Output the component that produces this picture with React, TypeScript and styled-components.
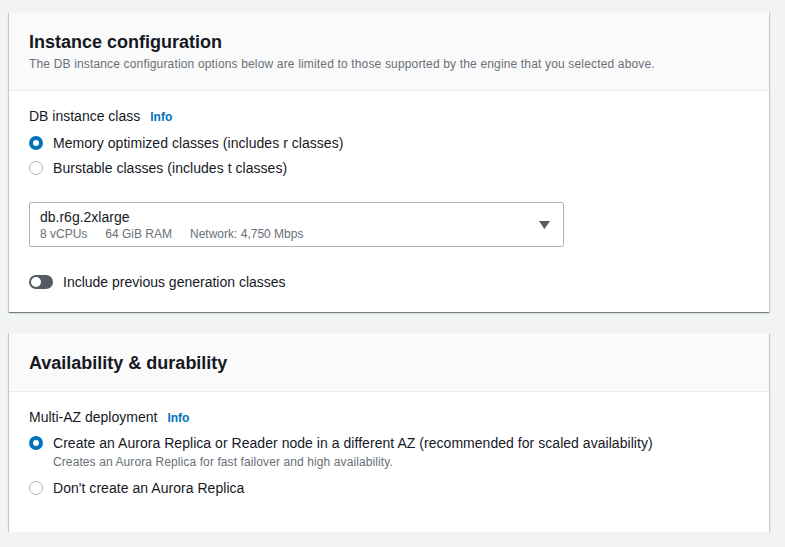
import React from "react";
import styled, { createGlobalStyle } from "styled-components";

const Global = createGlobalStyle`
  html, body { margin: 0; padding: 0; background: #f2f3f3; }
  body { font-family: "Liberation Sans", Arial, sans-serif; color: #16191f; -webkit-font-smoothing: antialiased; }
  * { box-sizing: border-box; }
`;

const Page = styled.div`
  display: flex;
  flex-direction: column;
  gap: 21px;
  padding: 12px 16px 0 9px;
  width: 785px;
`;

const Card = styled.section`
  background: #fff;
  box-shadow: 0 1px 1px 0 rgba(0, 28, 36, 0.35), 1px 1px 1px 0 rgba(0, 28, 36, 0.15),
    -1px 1px 1px 0 rgba(0, 28, 36, 0.15);
`;

const Header = styled.header<{ $bottom: number }>`
  background: #fafafa;
  border-bottom: 1px solid #eaeded;
  padding: 19px 20px ${(p) => p.$bottom}px;
`;

const Title = styled.h2`
  margin: 0;
  font-size: 18px;
  line-height: 22px;
  font-weight: 700;
  color: #16191f;
`;

const Desc = styled.p`
  margin: 3px 0 0;
  font-size: 12px;
  line-height: 16px;
  letter-spacing: 0.16px;
  color: #687078;
`;

const Body = styled.div<{ $bottom: number }>`
  display: flex;
  flex-direction: column;
  align-items: flex-start;
  padding: 15px 20px ${(p) => p.$bottom}px;
`;

const Label = styled.div`
  display: flex;
  align-items: baseline;
  gap: 10px;
  font-size: 14px;
  line-height: 20px;
  color: #16191f;
`;

const Info = styled.a`
  font-size: 12px;
  font-weight: 700;
  color: #0073bb;
  text-decoration: none;
`;

const RadioGroup = styled.div<{ $gap: number; $top: number }>`
  display: flex;
  flex-direction: column;
  gap: ${(p) => p.$gap}px;
  margin-top: ${(p) => p.$top}px;
`;

const RadioRow = styled.div`
  display: grid;
  grid-template-columns: 14px auto;
  column-gap: 10px;
  align-items: start;
`;

const RadioDot = styled.span<{ $on?: boolean }>`
  width: 14px;
  height: 14px;
  margin-top: 3px;
  border-radius: 50%;
  background: #fff;
  border: ${(p) => (p.$on ? "4px solid #0073bb" : "1px solid #aab7b8")};
`;

const RadioText = styled.div`
  font-size: 14px;
  line-height: 20px;
  letter-spacing: 0.04px;
  color: #16191f;
`;

const RadioDesc = styled.div`
  font-size: 12px;
  line-height: 16px;
  letter-spacing: 0.1px;
  color: #687078;
  margin-top: 1px;
`;

const Select = styled.div`
  margin-top: 24px;
  width: 535px;
  height: 45px;
  border: 1px solid #aab7b8;
  border-radius: 2px;
  display: flex;
  align-items: center;
  justify-content: space-between;
  padding: 0 13px 0 10px;
`;

const SelectMain = styled.div`
  font-size: 14px;
  line-height: 18px;
  color: #16191f;
`;

const Specs = styled.div`
  display: flex;
  gap: 18px;
  font-size: 12px;
  line-height: 16px;
  color: #687078;
`;

const ToggleRow = styled.div`
  display: flex;
  align-items: center;
  gap: 10px;
  margin-top: 25px;
  font-size: 14px;
  line-height: 20px;
  color: #16191f;
`;

const Toggle = styled.span`
  position: relative;
  width: 24px;
  height: 14px;
  border-radius: 7px;
  background: #545b64;
  &::after {
    content: "";
    position: absolute;
    left: 2px;
    top: 2px;
    width: 10px;
    height: 10px;
    border-radius: 50%;
    background: #fff;
  }
`;

const Caret = () => (
  <svg width="11" height="8" viewBox="0 0 11 8">
    <path d="M0 0 H11 L5.5 8 Z" fill="#545b64" />
  </svg>
);

export default function App() {
  return (
    <>
      <Global />
      <Page>
        <Card>
          <Header $bottom={18}>
            <Title>Instance configuration</Title>
            <Desc>
              The DB instance configuration options below are limited to those supported by the engine that you
              selected above.
            </Desc>
          </Header>
          <Body $bottom={20}>
            <Label>
              DB instance class <Info href="#">Info</Info>
            </Label>
            <RadioGroup $gap={5} $top={6}>
              <RadioRow>
                <RadioDot $on />
                <RadioText>Memory optimized classes (includes r classes)</RadioText>
              </RadioRow>
              <RadioRow>
                <RadioDot />
                <RadioText>Burstable classes (includes t classes)</RadioText>
              </RadioRow>
            </RadioGroup>
            <Select>
              <div>
                <SelectMain>db.r6g.2xlarge</SelectMain>
                <Specs>
                  <span>8 vCPUs</span>
                  <span>64 GiB RAM</span>
                  <span>Network: 4,750 Mbps</span>
                </Specs>
              </div>
              <Caret />
            </Select>
            <ToggleRow>
              <Toggle />
              Include previous generation classes
            </ToggleRow>
          </Body>
        </Card>
        <Card>
          <Header $bottom={17}>
            <Title>Availability &amp; durability</Title>
          </Header>
          <Body $bottom={34}>
            <Label>
              Multi-AZ deployment <Info href="#">Info</Info>
            </Label>
            <RadioGroup $gap={8} $top={5}>
              <RadioRow>
                <RadioDot $on />
                <div>
                  <RadioText>
                    Create an Aurora Replica or Reader node in a different AZ (recommended for scaled availability)
                  </RadioText>
                  <RadioDesc>Creates an Aurora Replica for fast failover and high availability.</RadioDesc>
                </div>
              </RadioRow>
              <RadioRow>
                <RadioDot />
                <RadioText>Don't create an Aurora Replica</RadioText>
              </RadioRow>
            </RadioGroup>
          </Body>
        </Card>
      </Page>
    </>
  );
}
